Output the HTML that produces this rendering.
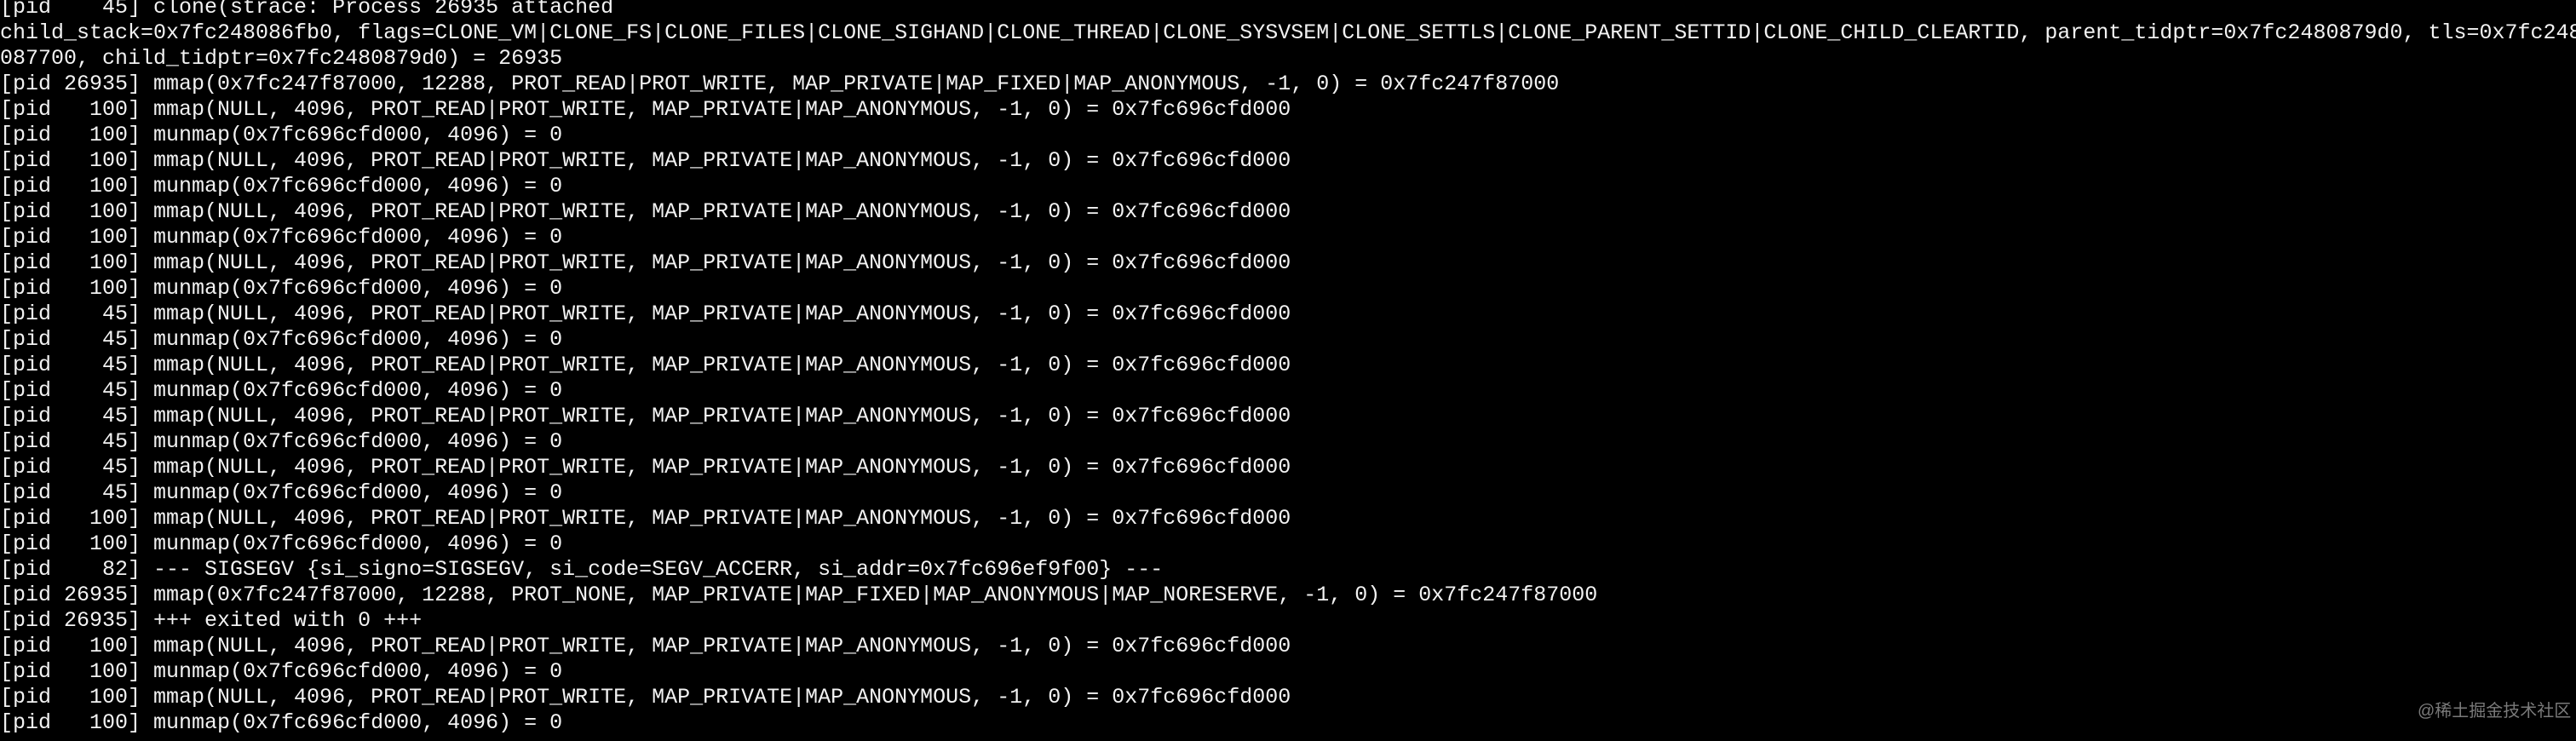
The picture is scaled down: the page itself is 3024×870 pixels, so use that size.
<!DOCTYPE html>
<html><head><meta charset="utf-8"><style>
html,body{margin:0;padding:0;background:#000;width:3024px;height:870px;overflow:hidden}
pre{margin:0;position:absolute;left:0;top:-6px;font-family:"Liberation Mono",monospace;font-size:25px;line-height:30px;color:#f2f2f2;white-space:pre}
.wm{position:absolute;left:2838px;top:818px;white-space:nowrap;font-family:"Liberation Sans","Noto Sans CJK SC",sans-serif;font-size:20px;color:#7a7a7a}
</style></head><body>
<pre>[pid    45] clone(strace: Process 26935 attached
child_stack=0x7fc248086fb0, flags=CLONE_VM|CLONE_FS|CLONE_FILES|CLONE_SIGHAND|CLONE_THREAD|CLONE_SYSVSEM|CLONE_SETTLS|CLONE_PARENT_SETTID|CLONE_CHILD_CLEARTID, parent_tidptr=0x7fc2480879d0, tls=0x7fc248
087700, child_tidptr=0x7fc2480879d0) = 26935
[pid 26935] mmap(0x7fc247f87000, 12288, PROT_READ|PROT_WRITE, MAP_PRIVATE|MAP_FIXED|MAP_ANONYMOUS, -1, 0) = 0x7fc247f87000
[pid   100] mmap(NULL, 4096, PROT_READ|PROT_WRITE, MAP_PRIVATE|MAP_ANONYMOUS, -1, 0) = 0x7fc696cfd000
[pid   100] munmap(0x7fc696cfd000, 4096) = 0
[pid   100] mmap(NULL, 4096, PROT_READ|PROT_WRITE, MAP_PRIVATE|MAP_ANONYMOUS, -1, 0) = 0x7fc696cfd000
[pid   100] munmap(0x7fc696cfd000, 4096) = 0
[pid   100] mmap(NULL, 4096, PROT_READ|PROT_WRITE, MAP_PRIVATE|MAP_ANONYMOUS, -1, 0) = 0x7fc696cfd000
[pid   100] munmap(0x7fc696cfd000, 4096) = 0
[pid   100] mmap(NULL, 4096, PROT_READ|PROT_WRITE, MAP_PRIVATE|MAP_ANONYMOUS, -1, 0) = 0x7fc696cfd000
[pid   100] munmap(0x7fc696cfd000, 4096) = 0
[pid    45] mmap(NULL, 4096, PROT_READ|PROT_WRITE, MAP_PRIVATE|MAP_ANONYMOUS, -1, 0) = 0x7fc696cfd000
[pid    45] munmap(0x7fc696cfd000, 4096) = 0
[pid    45] mmap(NULL, 4096, PROT_READ|PROT_WRITE, MAP_PRIVATE|MAP_ANONYMOUS, -1, 0) = 0x7fc696cfd000
[pid    45] munmap(0x7fc696cfd000, 4096) = 0
[pid    45] mmap(NULL, 4096, PROT_READ|PROT_WRITE, MAP_PRIVATE|MAP_ANONYMOUS, -1, 0) = 0x7fc696cfd000
[pid    45] munmap(0x7fc696cfd000, 4096) = 0
[pid    45] mmap(NULL, 4096, PROT_READ|PROT_WRITE, MAP_PRIVATE|MAP_ANONYMOUS, -1, 0) = 0x7fc696cfd000
[pid    45] munmap(0x7fc696cfd000, 4096) = 0
[pid   100] mmap(NULL, 4096, PROT_READ|PROT_WRITE, MAP_PRIVATE|MAP_ANONYMOUS, -1, 0) = 0x7fc696cfd000
[pid   100] munmap(0x7fc696cfd000, 4096) = 0
[pid    82] --- SIGSEGV {si_signo=SIGSEGV, si_code=SEGV_ACCERR, si_addr=0x7fc696ef9f00} ---
[pid 26935] mmap(0x7fc247f87000, 12288, PROT_NONE, MAP_PRIVATE|MAP_FIXED|MAP_ANONYMOUS|MAP_NORESERVE, -1, 0) = 0x7fc247f87000
[pid 26935] +++ exited with 0 +++
[pid   100] mmap(NULL, 4096, PROT_READ|PROT_WRITE, MAP_PRIVATE|MAP_ANONYMOUS, -1, 0) = 0x7fc696cfd000
[pid   100] munmap(0x7fc696cfd000, 4096) = 0
[pid   100] mmap(NULL, 4096, PROT_READ|PROT_WRITE, MAP_PRIVATE|MAP_ANONYMOUS, -1, 0) = 0x7fc696cfd000
[pid   100] munmap(0x7fc696cfd000, 4096) = 0</pre>
<div class="wm">@稀土掘金技术社区</div>
</body></html>
